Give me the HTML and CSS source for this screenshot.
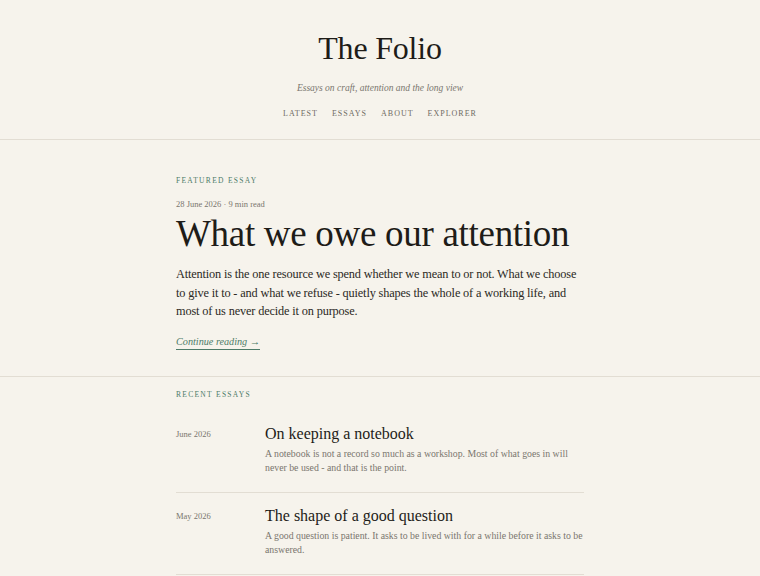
FILE: index.html
```html
<!DOCTYPE html>
<html lang="en">
<head>
  <meta charset="UTF-8">
  <meta name="viewport" content="width=device-width, initial-scale=1.0">
  <title>The Folio</title>
  <link rel="stylesheet" href="styles.css">
</head>
<body>
  <header class="site-header">
    <h1 class="site-title">The Folio</h1>
    <p class="tagline">Essays on craft, attention and the long view</p>
    <nav class="site-nav">
      <a href="#">Latest</a>
      <a href="#">Essays</a>
      <a href="#">About</a>
      <a href="#">Explorer</a>
    </nav>
  </header>

  <section class="featured">
    <div class="column">
      <div class="eyebrow">Featured essay</div>
      <div class="meta">28 June 2026 · 9 min read</div>
      <h2 class="featured-title">What we owe our attention</h2>
      <p class="lede">Attention is the one resource we spend whether we mean to or not. What we choose to give it to - and what we refuse - quietly shapes the whole of a working life, and most of us never decide it on purpose.</p>
      <a class="read-more" href="#">Continue reading →</a>
    </div>
  </section>

  <section class="recent">
    <div class="column">
      <div class="eyebrow">Recent essays</div>
      <ul class="essay-list">
        <li class="essay">
          <span class="essay-date">June 2026</span>
          <div class="essay-body">
            <h3>On keeping a notebook</h3>
            <p>A notebook is not a record so much as a workshop. Most of what goes in will never be used - and that is the point.</p>
          </div>
        </li>
        <li class="essay">
          <span class="essay-date">May 2026</span>
          <div class="essay-body">
            <h3>The shape of a good question</h3>
            <p>A good question is patient. It asks to be lived with for a while before it asks to be answered.</p>
          </div>
        </li>
      </ul>
    </div>
  </section>
</body>
</html>
```

FILE: styles.css
```css
body {
  margin: 0;
  background-color: #f6f3ec;
  color: #1e1c18;
  font-family: "Liberation Serif", "DejaVu Serif", serif;
}
a {
  color: inherit;
  text-decoration: none;
}
.site-header {
  text-align: center;
  padding: 28px 0 21px;
  border-bottom: 1px solid #e2ddd3;
}
.site-title {
  margin: 0;
  font-size: 32px;
  font-weight: 400;
  letter-spacing: -0.2px;
  line-height: 40px;
}
.tagline {
  margin: 15px 0 0;
  font-style: italic;
  font-size: 9.5px;
  color: #7a766e;
}
.site-nav {
  margin-top: 16px;
  display: flex;
  justify-content: center;
  gap: 14px;
}
.site-nav a {
  font-size: 8px;
  letter-spacing: 1px;
  text-transform: uppercase;
  color: #6f6b63;
}
.column {
  max-width: 408px;
  margin: 0 auto;
}
.featured {
  padding: 36px 0 26px;
  border-bottom: 1px solid #e2ddd3;
}
.eyebrow {
  font-size: 7.5px;
  letter-spacing: 1.3px;
  text-transform: uppercase;
  color: #4d7b68;
}
.meta {
  margin-top: 14px;
  font-size: 8.5px;
  color: #7a766e;
}
.featured-title {
  margin: 3px 0 0;
  font-size: 37px;
  font-weight: 400;
  letter-spacing: -0.3px;
  line-height: 44px;
}
.lede {
  max-width: 404px;
  margin: 9px 0 0;
  font-size: 12.3px;
  letter-spacing: -0.15px;
  line-height: 18.5px;
  color: #2b2924;
}
.read-more {
  display: inline-block;
  margin-top: 15px;
  font-style: italic;
  font-size: 10.2px;
  color: #4d7b68;
  padding-bottom: 2px;
  border-bottom: 1px solid #4d7b68;
}
.recent {
  padding-top: 13px;
}
.essay-list {
  list-style: none;
  margin: 16px 0 0;
  padding: 0;
}
.essay {
  display: grid;
  grid-template-columns: 89px 1fr;
  padding: 8px 0 17px;
  border-bottom: 1px solid #e2ddd3;
}
.essay + .essay {
  padding-top: 12px;
}
.essay-date {
  font-size: 8.5px;
  color: #7a766e;
  padding-top: 6px;
}
.essay-body h3 {
  margin: 0;
  font-size: 16px;
  font-weight: 400;
  line-height: 22px;
}
.essay-body p {
  margin: 2px 0 0;
  font-size: 9.8px;
  line-height: 14px;
  color: #7a766e;
}
```
